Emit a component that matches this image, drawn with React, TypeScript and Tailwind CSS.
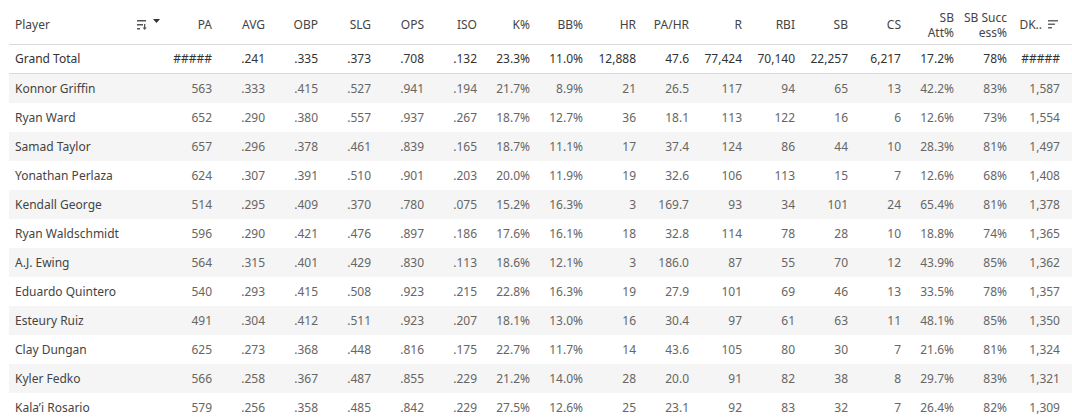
const cols = ["PA", "AVG", "OBP", "SLG", "OPS", "ISO", "K%", "BB%", "HR", "PA/HR", "R", "RBI", "SB", "CS"];

const total = ["#####", ".241", ".335", ".373", ".708", ".132", "23.3%", "11.0%", "12,888", "47.6", "77,424", "70,140", "22,257", "6,217", "17.2%", "78%", "#####"];

const rows: [string, string][] = [
  ["Konnor Griffin", "563 .333 .415 .527 .941 .194 21.7% 8.9% 21 26.5 117 94 65 13 42.2% 83% 1,587"],
  ["Ryan Ward", "652 .290 .380 .557 .937 .267 18.7% 12.7% 36 18.1 113 122 16 6 12.6% 73% 1,554"],
  ["Samad Taylor", "657 .296 .378 .461 .839 .165 18.7% 11.1% 17 37.4 124 86 44 10 28.3% 81% 1,497"],
  ["Yonathan Perlaza", "624 .307 .391 .510 .901 .203 20.0% 11.9% 19 32.6 106 113 15 7 12.6% 68% 1,408"],
  ["Kendall George", "514 .295 .409 .370 .780 .075 15.2% 16.3% 3 169.7 93 34 101 24 65.4% 81% 1,378"],
  ["Ryan Waldschmidt", "596 .290 .421 .476 .897 .186 17.6% 16.1% 18 32.8 114 78 28 10 18.8% 74% 1,365"],
  ["A.J. Ewing", "564 .315 .401 .429 .830 .113 18.6% 12.1% 3 186.0 87 55 70 12 43.9% 85% 1,362"],
  ["Eduardo Quintero", "540 .293 .415 .508 .923 .215 22.8% 16.3% 19 27.9 101 69 46 13 33.5% 78% 1,357"],
  ["Esteury Ruiz", "491 .304 .412 .511 .923 .207 18.1% 13.0% 16 30.4 97 61 63 11 48.1% 85% 1,350"],
  ["Clay Dungan", "625 .273 .368 .448 .816 .175 22.7% 11.7% 14 43.6 105 80 30 7 21.6% 81% 1,324"],
  ["Kyler Fedko", "566 .258 .367 .487 .855 .229 21.2% 14.0% 28 20.0 91 82 38 8 29.7% 83% 1,321"],
  ["Kala\u2019i Rosario", "579 .256 .358 .485 .842 .229 27.5% 12.6% 25 23.1 92 83 32 7 26.4% 82% 1,309"],
];

function SortIcon() {
  return (
    <svg width="12" height="10" viewBox="0 0 12 10" className="fill-[#555]">
      <rect x="0" y="0" width="9" height="1.5" />
      <rect x="0" y="4" width="6" height="1.5" />
      <rect x="0" y="8" width="3" height="1.5" />
      <rect x="7" y="4" width="1.3" height="5" />
      <path d="M5.5 7.5 L9.8 7.5 L7.65 10 Z" />
    </svg>
  );
}

function DescIcon() {
  return (
    <svg width="10" height="9" viewBox="0 0 10 9" className="fill-[#666]">
      <rect x="0" y="0" width="10" height="1.5" />
      <rect x="0" y="3.5" width="7" height="1.5" />
      <rect x="0" y="7" width="4" height="1.5" />
    </svg>
  );
}

export default function App() {
  return (
    <div className="w-[1072px] h-[419px] overflow-hidden bg-white pl-[9px] text-[12px] font-['Noto_Sans',sans-serif]">
      <div className="flex h-[45px] items-center pt-[5px] text-[#444] border-b border-[#d9d9d9]">
        <div className="w-[156px] pl-[6px] pr-[5px] flex items-center">
          <span className="flex-1">Player</span>
          <SortIcon />
          <svg width="7" height="5" viewBox="0 0 7 5" className="ml-[4px] mb-[6px] fill-[#333]">
            <path d="M0 0 L7 0 L3.5 4 Z" />
          </svg>
        </div>
        {cols.map((c) => (
          <div key={c} className="w-[53px] pr-[6px] text-right">{c}</div>
        ))}
        <div className="w-[53px] pr-[6px] text-right leading-[15px]">SB<br />Att%</div>
        <div className="w-[53px] pr-[6px] text-right leading-[15px]">SB Succ<br />ess%</div>
        <div className="w-[57px] pr-[12px] flex items-center justify-end gap-[6px]">
          <span>DK..</span>
          <DescIcon />
        </div>
      </div>
      <div className="flex h-[29px] items-center text-[#333] border-b border-[#d9d9d9]">
        <div className="w-[156px] pl-[6px]">Grand Total</div>
        {total.map((v, i) => (
          <div key={i} className="w-[53px] pr-[6px] text-right">{v}</div>
        ))}
      </div>
      {rows.map(([name, vals], r) => (
        <div key={name} className={`flex h-[29px] items-center text-[#666] ${r % 2 === 0 ? "bg-[#f5f5f5]" : "bg-white"}`}>
          <div className="w-[156px] pl-[6px] text-[#444]">{name}</div>
          {vals.split(" ").map((v, i) => (
            <div key={i} className="w-[53px] pr-[6px] text-right">{v}</div>
          ))}
        </div>
      ))}
    </div>
  );
}
